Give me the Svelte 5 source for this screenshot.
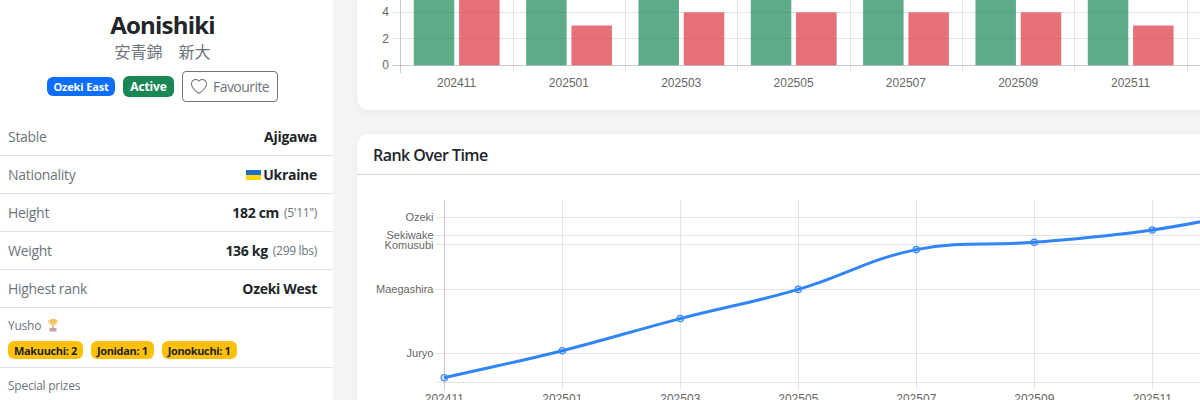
<script>
  const rows = [
    { label: 'Stable', value: 'Ajigawa' },
    { label: 'Nationality', value: 'Ukraine', flag: true },
    { label: 'Height', value: '182 cm', note: "(5'11\")" },
    { label: 'Weight', value: '136 kg', note: '(299 lbs)' },
    { label: 'Highest rank', value: 'Ozeki West' }
  ];
  const yusho = ['Makuuchi: 2', 'Jonidan: 1', 'Jonokuchi: 1'];

  // Bar chart
  const barLabels = ['202411', '202501', '202503', '202505', '202507', '202509', '202511'];
  const reds = [7, 3, 4, 4, 4, 4, 3];
  const bx0 = 400.4, bstep = 112.33;
  const by = (v) => 65.3 - v * 13.25;
  const bxGrid = Array.from({ length: 8 }, (_, i) => Math.round(bx0 + i * bstep) + 0.5);

  // Line chart
  const pts = [
    [444.3, 377.7], [562.3, 350.7], [680.3, 318.6], [798.3, 289.4],
    [916.3, 249.6], [1034.3, 242.3], [1152.3, 230], [1270.3, 208]
  ];
  const hLines = [
    { y: 217.5, t: 'Ozeki', dy: 3.5 }, { y: 235.5, t: 'Sekiwake', dy: 3.5 }, { y: 244.5, t: 'Komusubi', dy: 4 },
    { y: 289.5, t: 'Maegashira', dy: 3.5 }, { y: 353.5, t: 'Juryo', dy: 3.5 }, { y: 382.5, t: '', dy: 0 }
  ];
  const tension = 0.4;
  function linePath(p) {
    let d = `M${p[0][0]} ${p[0][1]}`;
    const ctrl = p.map((c, i) => {
      const a = p[Math.max(i - 1, 0)], b = p[Math.min(i + 1, p.length - 1)];
      const d01 = Math.hypot(c[0] - a[0], c[1] - a[1]);
      const d12 = Math.hypot(b[0] - c[0], b[1] - c[1]);
      const s = d01 + d12 || 1;
      const fa = (tension * d01) / s, fb = (tension * d12) / s;
      return {
        px: c[0] - fa * (b[0] - a[0]), py: c[1] - fa * (b[1] - a[1]),
        nx: c[0] + fb * (b[0] - a[0]), ny: c[1] + fb * (b[1] - a[1])
      };
    });
    for (let i = 1; i < p.length; i++) {
      d += ` C${ctrl[i - 1].nx} ${ctrl[i - 1].ny} ${ctrl[i].px} ${ctrl[i].py} ${p[i][0]} ${p[i][1]}`;
    }
    return d;
  }
  const path = linePath(pts);
</script>

<div class="page">
  <aside class="side">
    <header class="head">
      <h1 class="name">Aonishiki</h1>
      <div class="kana">安青錦　新大</div>
      <div class="tags">
        <span class="tag east">Ozeki East</span>
        <span class="tag active">Active</span>
        <button class="fav">
          <svg class="heart" viewBox="0 0 16 16" width="16" height="16" fill="currentColor">
            <path d="m8 2.748-.717-.737C5.6.281 2.514.878 1.4 3.053c-.523 1.023-.641 2.5.314 4.385.92 1.815 2.834 3.989 6.286 6.357 3.452-2.368 5.365-4.542 6.286-6.357.955-1.886.838-3.362.314-4.385C13.486.878 10.4.28 8.717 2.01L8 2.748zM8 15C-7.333 4.868 3.279-3.04 7.824 1.143c.06.055.119.112.176.171a3.12 3.12 0 0 1 .176-.17C12.72-3.042 23.333 4.867 8 15z"/>
          </svg>
          <span>Favourite</span>
        </button>
      </div>
    </header>

    {#each rows as r}
      <div class="row">
        <span class="lbl">{r.label}</span>
        <span class="val">
          {#if r.flag}
            <svg class="flag" width="15" height="10" viewBox="0 0 15 10"><rect width="15" height="5" fill="#1f6fc4"/><rect y="5" width="15" height="5" fill="#ffd500"/></svg>
          {/if}
          <b>{r.value}</b>
          {#if r.note}<small>{r.note}</small>{/if}
        </span>
      </div>
    {/each}

    <div class="block">
      <div class="cap">
        Yusho
        <svg class="cup" width="14" height="14" viewBox="0 0 14 14">
          <path d="M2 2h10v1.500c0 1.600-1 2.500-2.300 2.700l-.6-1c.9-.1 1.600-.6 1.700-1.700H3.200c.1 1.100.8 1.600 1.700 1.700l-.6 1C3 6 2 5.100 2 3.500z" fill="#eab44e" opacity=".6"/>
          <path d="M4 1h6v3.500C10 6.500 8.700 7.500 7 7.500S4 6.500 4 4.500z" fill="#eeb545" opacity=".75"/>
          <rect x="6.200" y="7.500" width="1.600" height="2.500" fill="#c99a4e" opacity=".7"/>
          <rect x="3.500" y="10" width="7" height="3.500" fill="#a87a70" opacity=".7"/>
        </svg>
      </div>
      <div class="prizes">
        {#each yusho as y}<span class="prize">{y}</span>{/each}
      </div>
    </div>
    <div class="block">
      <div class="cap">Special prizes</div>
    </div>
  </aside>

  <main class="main">
    <section class="card first">
      <svg class="chart" width="843" height="110" viewBox="357 0 843 110">
        {#each [12.5, 38.5] as y}<line class="grid" x1="392" x2="1200" y1={y} y2={y} />{/each}
        <line class="axis" x1="392" x2="1200" y1="65.500" y2="65.500" />
        {#each bxGrid as x, i}
          <line class={i === 0 ? 'axis' : 'grid'} x1={x} x2={x} y1="0" y2="73" />
        {/each}
        {#each ['4', '2', '0'] as t, i}
          <text class="lab" x="389" y={[16, 42.500, 69][i]} text-anchor="end">{t}</text>
        {/each}
        {#each barLabels as l, i}
          {@const x = bx0 + i * bstep}
          <rect class="green" x={x + 13.400} y="-20" width="40.500" height="85.300" />
          <rect class="red" x={x + 58.700} y={by(reds[i])} width="40.500" height={65.300 - by(reds[i])} />
          <text class="lab" x={x + bstep / 2} y="87" text-anchor="middle">{l}</text>
        {/each}
      </svg>
    </section>

    <section class="card second">
      <h2 class="title">Rank Over Time</h2>
      <svg class="chart" width="843" height="225" viewBox="357 175 843 225">
        {#each hLines as h}
          <line class="grid" x1="436" x2="1200" y1={h.y} y2={h.y} />
          {#if h.t}<text class="lab small" x="433.500" y={h.y + h.dy} text-anchor="end">{h.t}</text>{/if}
        {/each}
        {#each pts.slice(0, 7) as p, i}
          <line class={i === 0 ? 'axis' : 'grid'} x1={Math.floor(p[0]) + 0.5} x2={Math.floor(p[0]) + 0.5} y1="200" y2="390" />
          <text class="lab" x={p[0]} y="403" text-anchor="middle">{barLabels[i]}</text>
        {/each}
        <path class="line" d={path} />
        {#each pts as p}
          <circle class="pt" cx={p[0]} cy={p[1]} r="3.200" />
        {/each}
      </svg>
    </section>
  </main>
</div>

<style>
  :global(body) { margin: 0; }
  .page {
    display: flex;
    width: 1200px;
    height: 400px;
    overflow: hidden;
    background: #f3f4f6;
    font-family: "Open Sans", "Noto Sans CJK JP", sans-serif;
    color: #212529;
  }
  .side {
    flex: 0 0 333px;
    background: #fff;
    overflow: hidden;
  }
  .head {
    display: flex;
    flex-direction: column;
    align-items: center;
    height: 118px;
    padding: 10px 8px 0 0;
    box-sizing: border-box;
  }
  .name {
    margin: 0;
    font-size: 24px;
    font-weight: 700;
    line-height: 29px;
    letter-spacing: -0.8px;
  }
  .kana {
    font-family: "Noto Sans CJK JP", sans-serif;
    font-size: 16px;
    line-height: 24px;
    color: #6c757d;
  }
  .tags {
    display: flex;
    align-items: center;
    gap: 8px;
    margin-top: 8px;
  }
  .tag {
    color: #fff;
    font-weight: 700;
    border-radius: 6px;
    display: flex;
    align-items: center;
    justify-content: center;
  }
  .east { background: #0d6efd; width: 68px; height: 19px; font-size: 11px; letter-spacing: -0.15px; }
  .active { background: #198754; width: 51px; height: 21px; font-size: 12px; letter-spacing: -0.15px; }
  .fav {
    display: flex;
    align-items: center;
    gap: 6px;
    width: 96px;
    height: 31px;
    padding: 0 0 0 8px;
    box-sizing: border-box;
    border: 1px solid #6c757d;
    border-radius: 4px;
    background: #fff;
    color: #6c757d;
    font: inherit;
    font-size: 14px;
    letter-spacing: -0.55px;
  }
  .heart { flex: none; }
  .row {
    display: flex;
    justify-content: space-between;
    align-items: center;
    height: 38px;
    box-sizing: border-box;
    padding: 0 16px 0 8px;
    border-bottom: 1px solid #dee2e6;
    font-size: 14px;
    letter-spacing: -0.3px;
  }
  .lbl { color: #6c757d; }
  .val { display: flex; align-items: center; gap: 5px; }
  .val b { font-weight: 700; }
  .val small { font-size: 12px; letter-spacing: -0.3px; color: #6c757d; }
  .flag { margin-right: -3px; }
  .block {
    padding: 7px 8px 8px;
    border-bottom: 1px solid #dee2e6;
  }
  .cap {
    display: flex;
    align-items: center;
    gap: 5px;
    height: 20px;
    font-size: 12px;
    letter-spacing: -0.25px;
    color: #6c757d;
  }
  .prizes {
    display: flex;
    gap: 8px;
    margin-top: 6px;
  }
  .prize {
    display: flex;
    align-items: center;
    height: 18px;
    padding: 0 6px;
    border-radius: 6px;
    background: #ffc107;
    font-size: 11px;
    letter-spacing: -0.35px;
    font-weight: 700;
  }
  .main {
    flex: 1;
    min-width: 0;
    display: flex;
    flex-direction: column;
    gap: 24px;
    padding-left: 24px;
  }
  .card {
    flex: none;
    width: 900px;
    background: #fff;
    box-shadow: 0 2px 8px rgba(0, 0, 0, 0.05);
  }
  .first { height: 110px; border-radius: 0 0 12px 12px; }
  .second { border-radius: 12px 12px 0 0; }
  .chart { display: block; }
  .title {
    margin: 0;
    height: 41px;
    box-sizing: border-box;
    padding: 10px 16px 0;
    border-bottom: 1px solid #d5d7d9;
    font-size: 16px;
    line-height: 22px;
    font-weight: 600;
    letter-spacing: -0.55px;
  }
  .grid { stroke: rgba(0, 0, 0, 0.1); stroke-width: 1; }
  .axis { stroke: rgba(0, 0, 0, 0.2); stroke-width: 1; }
  .lab {
    font-family: "Liberation Sans", Arial, sans-serif;
    font-size: 12px;
    fill: #666;
  }
  .small { font-size: 11px; }
  .green { fill: rgba(25, 135, 84, 0.7); }
  .red { fill: rgba(220, 53, 62, 0.7); }
  .line { fill: none; stroke: #3185f9; stroke-width: 3; }
  .pt { fill: rgba(13, 110, 253, 0.2); stroke: #3a8afa; stroke-width: 1.200; }
</style>
